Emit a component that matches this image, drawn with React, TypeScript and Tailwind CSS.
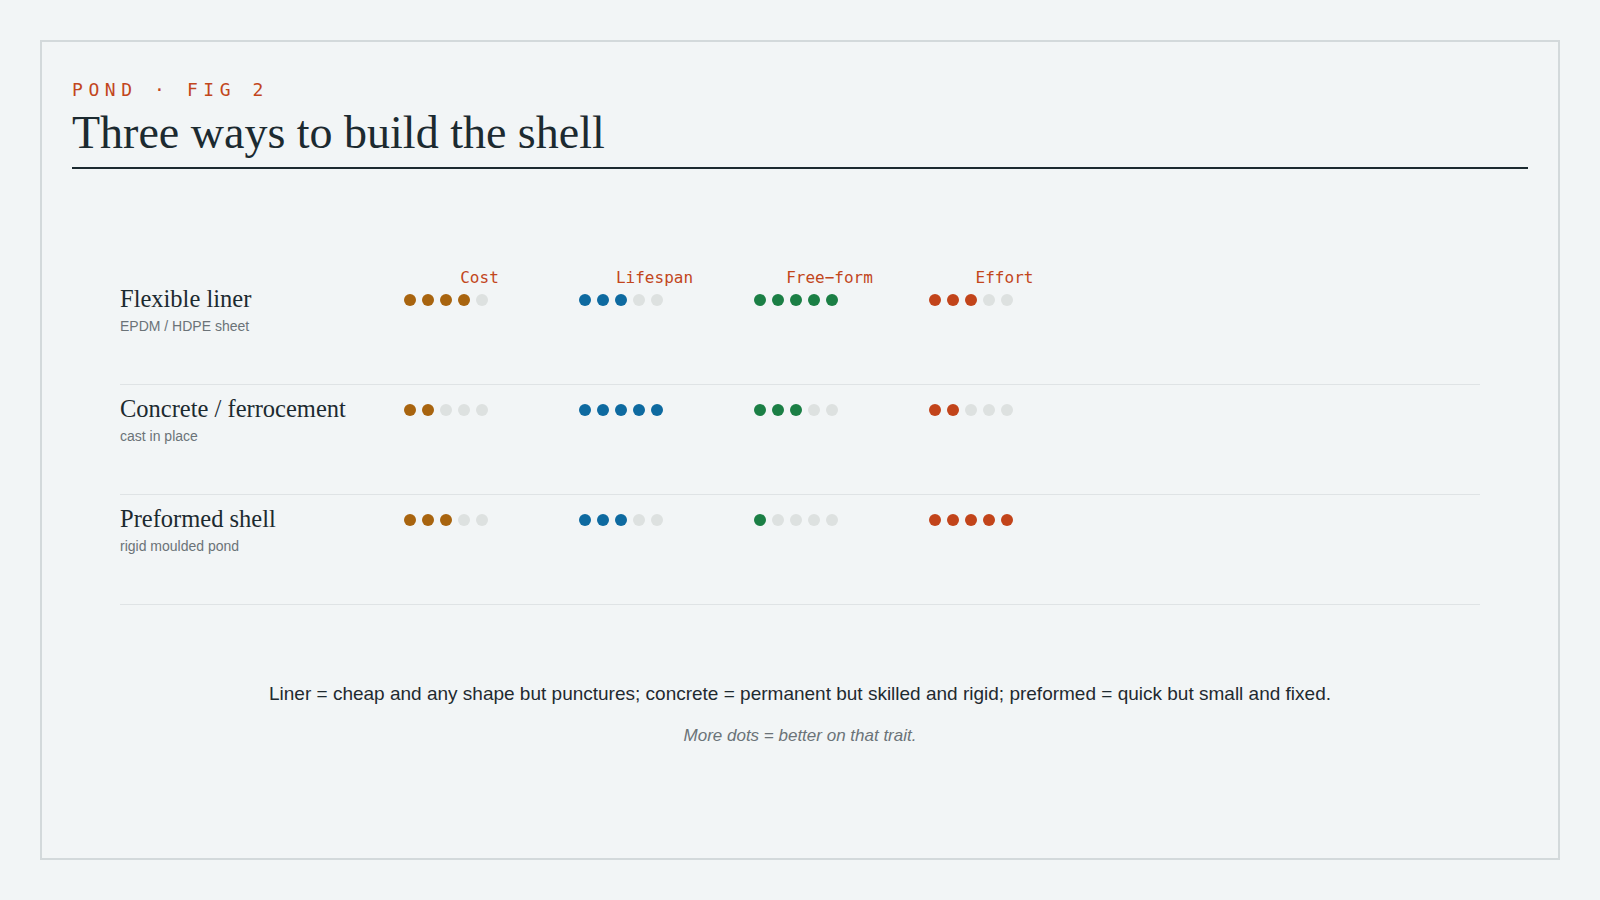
import React from 'react';

interface Row {
  name: string;
  sub: string;
  scores: number[];
}

// one colour per trait column, same order as traits
const traits = ['Cost', 'Lifespan', 'Free\u2212form', 'Effort'];
const dotColors = ['bg-[#a8640f]', 'bg-[#0e6aa0]', 'bg-[#1b7f45]', 'bg-[#c2441a]'];

const rows: Row[] = [
  { name: 'Flexible liner', sub: 'EPDM / HDPE sheet', scores: [4, 3, 5, 3] },
  { name: 'Concrete / ferrocement', sub: 'cast in place', scores: [2, 5, 3, 2] },
  { name: 'Preformed shell', sub: 'rigid moulded pond', scores: [3, 3, 1, 5] },
];

const serif = "font-['Liberation_Serif',Georgia,serif]";
const sans = "font-['Liberation_Sans',Helvetica,Arial,sans-serif]";
const mono = "font-['DejaVu_Sans_Mono','Liberation_Mono',monospace]";

function Dots({ score, color }: { score: number; color: string }) {
  return (
    <div className="flex h-[28px] items-center gap-[6px] pt-[1px]">
      {[0, 1, 2, 3, 4].map((i) => (
        <span key={i} className={`h-[12px] w-[12px] rounded-full ${i < score ? color : 'bg-[#dde1e0]'}`} />
      ))}
    </div>
  );
}

export default function App() {
  return (
    <div className="min-h-[900px] bg-[#f2f5f6] p-10">
      <div className="h-[820px] border-2 border-[#d3d9db] px-[30px] pt-[36px]">
        <div className={`${mono} text-[18px] leading-[24px] tracking-[0.31em] text-[#c2461c]`}>POND · FIG 2</div>
        <div className="mt-[7px] border-b-2 border-[#1c2a30] pb-[10px]">
          <h1 className={`${serif} text-[46px] leading-[48px] text-[#1c2a30]`}>Three ways to build the shell</h1>
        </div>

        <div className="mx-12 mt-[102px]">
          <div className="grid grid-cols-[260px_151px_151px_151px_151px] gap-x-6">
            <div />
            {traits.map((t) => (
              <div key={t} className={`${mono} text-center text-[16px] leading-[14px] text-[#c2461c]`}>
                {t}
              </div>
            ))}
          </div>

          {rows.map((row, idx) => (
            <div
              key={row.name}
              className={`grid grid-cols-[260px_151px_151px_151px_151px] gap-x-6 border-b border-[#dfe3e5] pb-[48px] ${idx === 0 ? 'pt-0' : 'pt-[10px]'}`}
            >
              <div>
                <div className={`${serif} text-[24.5px] leading-[28px] text-[#1c2a30]`}>{row.name}</div>
                <div className={`${sans} mt-[3px] text-[14px] leading-[20px] text-[#6b7378]`}>{row.sub}</div>
              </div>
              {row.scores.map((s, i) => (
                <Dots key={i} score={s} color={dotColors[i]} />
              ))}
            </div>
          ))}
        </div>

        <p className={`${sans} mt-[75px] text-center text-[19px] leading-[28px] text-[#1f2a30]`}>
          Liner = cheap and any shape but punctures; concrete = permanent but skilled and rigid; preformed = quick but small and fixed.
        </p>
        <p className={`${sans} mt-[16px] text-center text-[17px] italic leading-[24px] text-[#6b7378]`}>
          More dots = better on that trait.
        </p>
      </div>
    </div>
  );
}
